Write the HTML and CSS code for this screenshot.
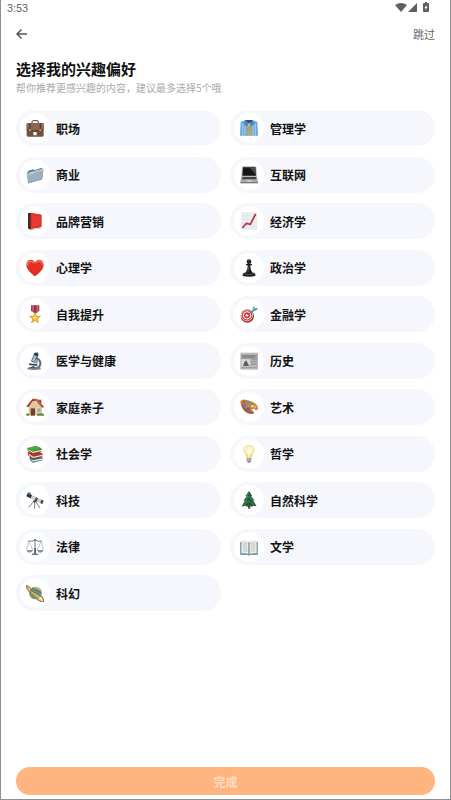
FILE: index.html
```html
<!DOCTYPE html>
<html lang="zh-CN">
<head>
  <meta charset="UTF-8">
  <meta name="viewport" content="width=device-width, initial-scale=1">
  <title>选择我的兴趣偏好</title>
  <link rel="stylesheet" href="styles.css">
</head>
<body>
  <div class="screen">
    <div class="status-bar">
      <span>3:53</span>
      <svg class="status-icons" viewBox="0 0 36 12" aria-hidden="true">
        <path d="M0 3Q6-1 12 3L6 10z"/>
        <path d="M22 1v9h-9z"/>
        <path fill-rule="evenodd" d="M29 1h1V0h2v1h1q1 0 1 1v7q0 1-1 1h-4q-1 0-1-1V2q0-1 1-1zM31.500 3L29.500 6h1v2l2-3h-1z"/>
      </svg>
    </div>

    <header class="top-bar">
      <button type="button" class="back" aria-label="返回">
        <svg viewBox="0 0 12 12" aria-hidden="true"><path d="M11 6H1M5.500 1.500L1 6l4.500 4.500"/></svg>
      </button>
      <a class="skip" href="#">跳过</a>
    </header>

    <h1>选择我的兴趣偏好</h1>
    <p class="hint">帮你推荐更感兴趣的内容，建议最多选择5个哦</p>

    <main class="topics">
      <button type="button" class="topic">
        <span class="icon"><svg viewBox="0 0 54 54" aria-hidden="true">
          <path d="M18 13V8q0-3 4-3h11q4 0 4 3v5" fill="none" stroke="#4b3429" stroke-width="3"/>
          <rect x="2" y="12" width="51" height="41" rx="4" fill="#725040"/>
          <path d="M2 16q0-4 4-4h43q4 0 4 4v16q-25 7-51 0z" fill="#8b6551"/>
          <path d="M2 32q25 7 51 0" fill="none" stroke="#4a3024" stroke-width="2"/>
          <path d="M12 13v20M43 13v20" stroke="#533a2e" stroke-width="4"/>
          <path d="M9 31h6v5H9zM40 31h6v5h-6z" fill="#b9a58c"/>
          <rect x="22" y="39" width="10" height="10" rx="1" fill="#fff3e9"/>
        </svg></span>
        职场
      </button>
      <button type="button" class="topic">
        <span class="icon"><svg viewBox="0 0 54 54" aria-hidden="true">
          <path d="M2 8l14-4 11 5 11-5 14 4 2 42H0z" fill="#6aa7dc"/>
          <path d="M8 14v36M15 20v30M39 20v30M46 14v36" stroke="#a8cff0" stroke-width="3"/>
          <path d="M16 3h22l-3 8-8 5-8-5z" fill="#254f80"/>
          <path d="M15 3l-3 12 9 7 6-9zM39 3l3 12-9 7-6-9z" fill="#4385c3"/>
          <path d="M23 13h8l-1 6 4 24-7 8-7-8 4-24z" fill="#d7b15b"/>
          <path d="M22 29l10-7M21 38l12-9M22 46l11-8" stroke="#8d713b" stroke-width="2"/>
        </svg></span>
        管理学
      </button>
      <button type="button" class="topic">
        <span class="icon"><svg viewBox="0 0 54 54" aria-hidden="true">
          <path d="M4 19l3-5 15-4 4 3 21-8 3 4v27L7 50z" fill="#64788a"/>
          <path d="M8 20l40-11 2 12-40 12z" fill="#dce5e9"/>
          <path d="M2 24l21-5 4-4 26-5-5 30L6 51z" fill="#9eb0c0"/>
          <path d="M5 26l20-5 4-4 22-4" fill="none" stroke="#cad6de" stroke-width="2"/>
          <path d="M6 51l42-11" stroke="#718292" stroke-width="2"/>
        </svg></span>
        商业
      </button>
      <button type="button" class="topic">
        <span class="icon"><svg viewBox="0 0 54 54" aria-hidden="true">
          <path d="M6 3q0-2 2-2h38q3 0 3 2l2 28H4z" fill="#b8b8b8"/>
          <path d="M9 4h37l2 25H7z" fill="#161719"/>
          <path d="M28 4h18l2 22z" fill="#4c4d50"/>
          <path d="M4 31h47l3 17H1z" fill="#aaa9a9"/>
          <path d="M8 33h40l1 7H6z" fill="#424345"/>
          <path d="M21 42h13l1 5H20z" fill="#cfcece"/>
          <path d="M1 48h53v4H1z" fill="#777"/>
        </svg></span>
        互联网
      </button>
      <button type="button" class="topic">
        <span class="icon"><svg viewBox="0 0 54 54" aria-hidden="true">
          <path d="M6 4l6-2 33 7v40l-31 4-8-4z" fill="#781d1c"/>
          <path d="M6 5l6-3v50l-6-3z" fill="#353032"/>
          <path d="M14 50l31-5v4l-29 4z" fill="#eee0d5"/>
          <path d="M14 3l33 5v36l-33 6z" fill="#df3027"/>
          <path d="M18 8l25 4v28l-25 5z" fill="#e83a2e"/>
        </svg></span>
        品牌营销
      </button>
      <button type="button" class="topic">
        <span class="icon"><svg viewBox="0 0 54 54" aria-hidden="true">
          <path d="M5 2h45v50H5z" fill="#e9f1f6" stroke="#c6d2d9"/>
          <path d="M13 3v48M22 3v48M31 3v48M40 3v48M6 12h43M6 22h43M6 32h43M6 42h43" stroke="#cbdce5"/>
          <path d="M7 48l12-14 12 3 16-31" fill="none" stroke="#cb2936" stroke-width="5"/>
        </svg></span>
        经济学
      </button>
      <button type="button" class="topic">
        <span class="icon"><svg viewBox="0 0 54 54" aria-hidden="true">
          <path d="M27 52C16 42 1 33 1 17 1 1 20-3 27 11 34-3 53 1 53 17c0 16-15 25-26 35z" fill="#e33127"/>
          <path d="M5 20C3 5 18 2 24 13M31 11C38 1 50 6 49 17" fill="none" stroke="#ff7564" stroke-width="4"/>
          <path d="M12 33q7 9 15 16 11-9 18-18" fill="none" stroke="#b91f1b" stroke-width="2"/>
        </svg></span>
        心理学
      </button>
      <button type="button" class="topic">
        <span class="icon"><svg viewBox="0 0 54 54" aria-hidden="true">
          <circle cx="27" cy="8" r="7" fill="#1d1e1f"/>
          <path d="M18 15h18v4h-5q0 15 7 22H16q7-7 7-22h-5zM12 41h30l4 5v5q-19 5-38 0v-5z" fill="#1d1e1f"/>
          <path d="M24 5q3-3 6 0M26 22q0 11-3 18M13 45q14 3 28 0" fill="none" stroke="#66696b" stroke-width="2"/>
        </svg></span>
        政治学
      </button>
      <button type="button" class="topic">
        <span class="icon"><svg viewBox="0 0 54 54" aria-hidden="true">
          <path d="M15 1h25v17l-12 8-13-8z" fill="#b3353f"/>
          <path d="M21 1v20M34 1v20" stroke="#e5a0a2" stroke-width="2"/>
          <path d="M27 1v22" stroke="#654369" stroke-width="4"/>
          <path d="M27 21l5 12 12 1-10 8 4 12-11-7-11 7 4-12-10-8 12-1z" fill="#e7b321" stroke="#af7c18"/>
          <path d="M27 27l3 9 7 1-7 4 2 7-5-4-5 4 2-7-7-4 7-1z" fill="#f8dc5f"/>
        </svg></span>
        自我提升
      </button>
      <button type="button" class="topic">
        <span class="icon"><svg viewBox="0 0 54 54" aria-hidden="true">
          <circle cx="22" cy="33" r="20" fill="#9d2527"/>
          <circle cx="21" cy="31" r="17" fill="#d34240" stroke="#fff" stroke-width="2"/>
          <circle cx="21" cy="31" r="11" fill="#cf3439" stroke="#fff" stroke-width="3"/>
          <circle cx="21" cy="31" r="4" fill="#fff"/>
          <path d="M22 30l21-16" stroke="#45636a" stroke-width="3"/>
          <path d="M36 16l4-11 5-1-1 6 9-1-1 5-11 6z" fill="#55bec8"/>
          <path d="M39 17l12-7" stroke="#277e91" stroke-width="2"/>
        </svg></span>
        金融学
      </button>
      <button type="button" class="topic">
        <span class="icon"><svg viewBox="0 0 54 54" aria-hidden="true">
          <path d="M28 17q17 5 15 20-2 10-11 11" fill="none" stroke="#586f80" stroke-width="6"/>
          <path d="M25 3l10-2 3 8-12 24-11-5z" fill="#466176"/>
          <path d="M25 9l7 3-8 17-6-3z" fill="#adc2cc"/>
          <path d="M27 2l9 4-3 6-9-4z" fill="#23323e"/>
          <path d="M10 34l24 3v5L9 39z" fill="#354c5c"/>
          <path d="M5 47q15-6 38 0l2 5q-20 4-41 0z" fill="#6f8290"/>
          <path d="M11 47l12-6 5 8z" fill="#465864"/>
          <circle cx="31" cy="29" r="6" fill="#94a8b2"/>
        </svg></span>
        医学与健康
      </button>
      <button type="button" class="topic">
        <span class="icon"><svg viewBox="0 0 54 54" aria-hidden="true">
          <path d="M1 2h53v51H1z" fill="#bbb"/>
          <path d="M3 10h49M3 18h49" stroke="#666" stroke-width="2"/>
          <path d="M7 14h40" stroke="#777" stroke-width="5" stroke-dasharray="3 1"/>
          <path d="M5 22h24v21H5z" fill="#ddd"/>
          <path d="M9 42l4-12 6-5 4 8 5 9z" fill="#606060"/>
          <path d="M33 23h18M33 28h18M33 33h18M33 38h18M5 47h45" stroke="#878787" stroke-width="2"/>
        </svg></span>
        历史
      </button>
      <button type="button" class="topic">
        <span class="icon"><svg viewBox="0 0 54 54" aria-hidden="true">
          <path d="M38 5h8v16h-8z" fill="#a34d37"/>
          <path d="M8 25L23 8l25 17v26H8z" fill="#e4c696"/>
          <path d="M1 25L20 2l14 1 20 24-5 2L30 9 20 10 7 28z" fill="#943f30"/>
          <path d="M21 3l13 1 16 19-5 1L31 10z" fill="#ba6650"/>
          <path d="M14 31h13v22H14z" fill="#74402c"/>
          <path d="M33 30h12v13H33z" fill="#6799b3" stroke="#f7ebce" stroke-width="2"/>
          <path d="M39 30v13M33 36h12" stroke="#f7ebce"/>
          <path d="M1 53v-6q6-4 9 2v4zM33 53v-5q10-5 21 0v5z" fill="#64883b"/>
        </svg></span>
        家庭亲子
      </button>
      <button type="button" class="topic">
        <span class="icon"><svg viewBox="0 0 54 54" aria-hidden="true">
          <path fill-rule="evenodd" d="M2 17Q-2 3 15 5c17 1 39 12 39 26 0 5-5 9-10 3-5-5-10 1-5 6 5 6-2 9-9 7C17 45 5 34 2 17zm34 4q-5 5 2 7 5-5-2-7z" fill="#c78843"/>
          <path d="M4 14q12 25 36 27 4 5-2 7C20 49 4 31 4 14z" fill="#9c5f34"/>
          <circle cx="12" cy="12" r="5" fill="#d35843"/>
          <circle cx="24" cy="13" r="5" fill="#44a59b"/>
          <circle cx="14" cy="22" r="5" fill="#4d83c4"/>
          <circle cx="24" cy="34" r="6" fill="#8b529e"/>
          <circle cx="45" cy="27" r="4" fill="#e5b940"/>
          <circle cx="35" cy="17" r="4" fill="#75a33e"/>
        </svg></span>
        艺术
      </button>
      <button type="button" class="topic">
        <span class="icon"><svg viewBox="0 0 54 54" aria-hidden="true">
          <path d="M11 35l31-3 8 7-1 7-29 7-9-11z" fill="#1f6475"/>
          <path d="M14 39l7 7 28-6v4l-29 6z" fill="#eee8d6"/>
          <path d="M5 22l31-4 14 8-1 9-28 7L6 31z" fill="#b83232"/>
          <path d="M8 26l14 9 27-6v4l-28 6L8 30z" fill="#f2e5d1"/>
          <path d="M4 10L30 3l17 8-1 9-26 6L5 17z" fill="#397a31"/>
          <path d="M7 13l14 7 25-6v4l-25 6L7 16z" fill="#eaeada"/>
          <path d="M4 9L30 2l17 8-26 8z" fill="#59a23f"/>
        </svg></span>
        社会学
      </button>
      <button type="button" class="topic">
        <span class="icon"><svg viewBox="0 0 54 54" aria-hidden="true">
          <path d="M27 1C15 1 9 10 12 20c2 7 8 10 8 19h14c0-9 6-12 8-19C45 10 39 1 27 1z" fill="#fbf0ba" stroke="#e4cf95" stroke-width="2"/>
          <path d="M23 37l-3-18 7 4 7-4-3 18" fill="none" stroke="#e6bd56" stroke-width="2"/>
          <path d="M20 14q7-7 14 0v12H20z" fill="#fffbdc"/>
          <path d="M20 39h14v9l-4 5h-6l-4-5z" fill="#8a8d8e"/>
          <path d="M20 42h14M21 46h12" stroke="#d3d3cc" stroke-width="2"/>
        </svg></span>
        哲学
      </button>
      <button type="button" class="topic">
        <span class="icon"><svg viewBox="0 0 54 54" aria-hidden="true">
          <path d="M25 29L8 49M26 29v24M27 29l15 22" stroke="#777d80" stroke-width="3"/>
          <path d="M7 9l45 21-3 8L4 16z" fill="#d2d5d4" stroke="#737778"/>
          <path d="M5 6l13 6-4 10L1 16z" fill="#26384d"/>
          <path d="M30 19l6 3-4 10-6-3zM46 26l7 3-4 10-6-3z" fill="#42484c"/>
          <path d="M5 3l10 2-3 7z" fill="#527596"/>
          <circle cx="26" cy="31" r="4" fill="#494f52"/>
        </svg></span>
        科技
      </button>
      <button type="button" class="topic">
        <span class="icon"><svg viewBox="0 0 54 54" aria-hidden="true">
          <path d="M24 41h7v12h-7z" fill="#70462d"/>
          <path d="M27 0l10 16-4-1 11 14-5-1 11 18-10-2-4 3-8-3-7 3-5-3-11 3 10-19-5 1 11-14-5 1z" fill="#245c3b"/>
          <path d="M26 6l-6 13 9-2M23 20l-8 14 14-3M20 35l-8 9M32 18l5 11M34 32l8 12" fill="none" stroke="#4b8654" stroke-width="3"/>
        </svg></span>
        自然科学
      </button>
      <button type="button" class="topic">
        <span class="icon"><svg viewBox="0 0 54 54" aria-hidden="true">
          <path d="M27 3v45M6 9q12 3 21-3 9 6 21 3" fill="none" stroke="#667985" stroke-width="3"/>
          <path d="M8 9L2 36M8 9l12 27M46 9L34 36M46 9l6 27" fill="none" stroke="#9caab3" stroke-width="2"/>
          <path d="M1 36h20q-3 8-10 8T1 36zM33 36h20q-3 8-10 8t-10-8z" fill="#82939e"/>
          <path d="M25 30h5v15h-5z" fill="#4c6170"/>
          <path d="M16 51q2-5 11-6 9 1 11 6z" fill="#62737e"/>
          <circle cx="27" cy="5" r="3" fill="#758b9a"/>
        </svg></span>
        法律
      </button>
      <button type="button" class="topic">
        <span class="icon"><svg viewBox="0 0 54 54" aria-hidden="true">
          <path d="M1 12h52v38H31l-4 3-4-3H1z" fill="#447a96"/>
          <path d="M4 8q14-3 23 5v36q-9-5-23-3zM50 8q-14-3-23 5v36q9-5 23-3z" fill="#f3f2eb" stroke="#c4cbd0"/>
          <path d="M27 13v36" stroke="#69747c" stroke-width="3"/>
          <path d="M8 14l14 2M8 20l14 2M8 26l14 2M8 32l14 2M8 38l14 2M32 16l14-2M32 22l14-2M32 28l14-2M32 34l14-2M32 40l14-2" stroke="#9fa3a6" stroke-width="2"/>
        </svg></span>
        文学
      </button>
      <button type="button" class="topic">
        <span class="icon"><svg viewBox="0 0 54 54" aria-hidden="true">
          <circle cx="28" cy="27" r="19" fill="#7d9471"/>
          <path d="M15 13q14-10 27 2l3 6-16-8zM19 22l26 14-5 8-25-20z" fill="#c7bd75"/>
          <path d="M12 18l34 19M18 12l28 15" stroke="#547367" stroke-width="3"/>
          <path d="M14 14C-2-1-3 5 8 20c12 15 31 32 42 33 7 0 1-11-7-20" fill="none" stroke="#a87a3f" stroke-width="4"/>
          <path d="M13 16C2 6 4 11 12 20c11 13 26 25 36 30" fill="none" stroke="#e0bd78" stroke-width="2"/>
        </svg></span>
        科幻
      </button>
    </main>

    <footer>
      <button type="button" class="done" disabled>完成</button>
    </footer>
  </div>
</body>
</html>
```
FILE: styles.css
```css
* {
  box-sizing: border-box;
}

body {
  margin: 0;
  background: #fff;
  color: #111;
  font-family: "Noto Sans CJK SC", sans-serif;
}

button {
  padding: 0;
  border: none;
  background: none;
  color: inherit;
  font-family: inherit;
  cursor: pointer;
}

svg {
  display: block;
}

.screen {
  display: flex;
  flex-direction: column;
  min-height: 100vh;
  padding: 0 15px;
  border: 1px solid #8e8e8e;
  border-top: none;
}

/* Status bar */
.status-bar {
  display: flex;
  justify-content: space-between;
  align-items: center;
  height: 16px;
  margin: 0 4px 0 -9px;
  color: #666;
  font-family: Roboto, sans-serif;
  font-size: 11px;
}

.status-icons {
  width: 36px;
  height: 12px;
  fill: #5f5f5f;
}

/* Back and skip */
.top-bar {
  display: flex;
  justify-content: space-between;
  align-items: center;
  height: 36px;
}

.back svg {
  width: 12px;
  height: 12px;
  fill: none;
  stroke: #555;
  stroke-width: 1.5;
}

.skip {
  color: #666;
  font-size: 11px;
  text-decoration: none;
}

h1 {
  margin: 6px 0 0;
  font-size: 15px;
  line-height: 22px;
}

.hint {
  margin: 0 0 14px;
  color: #aaa;
  font-size: 10px;
  line-height: 16px;
}

/* Topic list */
.topics {
  flex: 1;
  display: grid;
  grid-template-columns: 1fr 1fr;
  align-content: space-between;
  gap: 9px;
}

.topic {
  display: flex;
  align-items: center;
  gap: 6px;
  height: 36px;
  padding: 0 4px;
  border-radius: 18px;
  background: #f6f7fc;
  font-size: 12px;
  font-weight: bold;
}

.icon {
  display: flex;
  justify-content: center;
  align-items: center;
  width: 30px;
  height: 30px;
  border-radius: 50%;
  background: #fff;
}

.icon svg {
  width: 18px;
  height: 18px;
}

footer {
  padding: 156px 0 4px;
}

.done {
  display: block;
  width: 100%;
  height: 28px;
  border-radius: 14px;
  background: #ffb580;
  color: #ffdcc3;
  font-size: 12px;
  font-weight: bold;
}
```
